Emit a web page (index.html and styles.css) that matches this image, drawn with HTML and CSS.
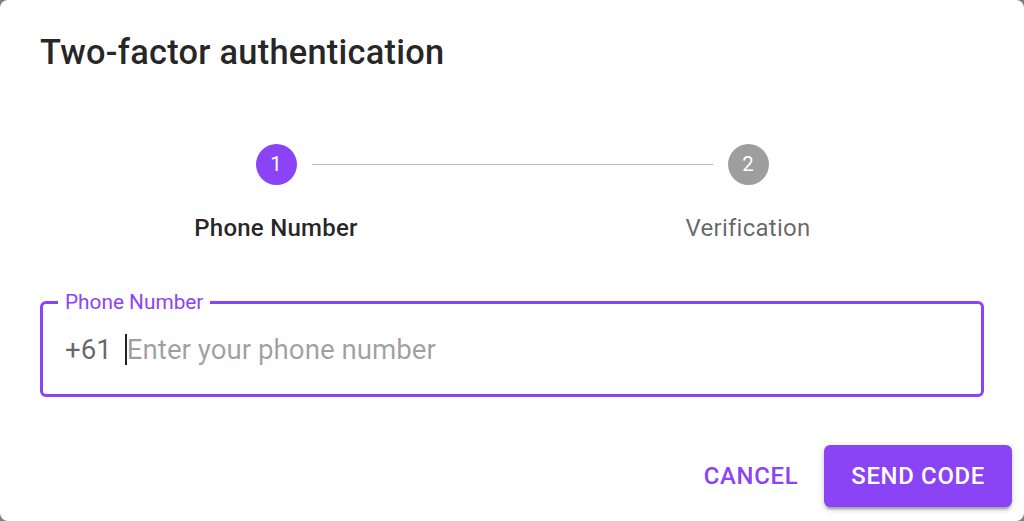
FILE: index.html
```html
<!DOCTYPE html>
<html lang="en">
<head>
<meta charset="utf-8">
<title>Two-factor authentication</title>
<link rel="stylesheet" href="styles.css">
</head>
<body>
<div class="dialog">
  <h2 class="title">Two-factor authentication</h2>
  <div class="content">
    <div class="stepper">
      <div class="step">
        <div class="step-icon active">1</div>
        <div class="step-label active">Phone Number</div>
      </div>
      <div class="step">
        <div class="connector"></div>
        <div class="step-icon">2</div>
        <div class="step-label">Verification</div>
      </div>
    </div>
    <fieldset class="field">
      <legend class="field-label">Phone Number</legend>
      <div class="field-input">
        <span class="prefix">+61</span>
        <span class="caret"></span>
        <span class="placeholder">Enter your phone number</span>
      </div>
    </fieldset>
  </div>
  <div class="actions">
    <button class="btn btn-text">CANCEL</button>
    <button class="btn btn-contained">SEND CODE</button>
  </div>
</div>
</body>
</html>
```
FILE: styles.css
```css
* { box-sizing: border-box; }
html, body {
  margin: 0;
  padding: 0;
  background: #7d7d7d;
  font-family: Roboto, "Liberation Sans", sans-serif;
}
.dialog {
  width: 1024px;
  height: 521px;
  background: #ffffff;
  border-radius: 8px;
  display: flex;
  flex-direction: column;
  overflow: hidden;
}
.title {
  margin: 0;
  padding: 26px 40px 0;
  font-size: 34.4px;
  font-weight: 500;
  line-height: 52px;
  letter-spacing: 0.0075em;
  color: rgba(0, 0, 0, 0.87);
}
.content {
  padding: 0 40px;
}
.stepper {
  display: flex;
  margin-top: 66px;
}
.step {
  flex: 1;
  display: flex;
  flex-direction: column;
  align-items: center;
  position: relative;
}
.connector {
  position: absolute;
  top: 20px;
  left: calc(-50% + 36px);
  right: calc(50% + 35px);
  border-top: 1.6px solid #bdbdbd;
}
.step-icon {
  width: 41px;
  height: 41px;
  border-radius: 50%;
  background: #9e9e9e;
  color: #ffffff;
  font-size: 20.4px;
  line-height: 41px;
  text-align: center;
}
.step-icon.active {
  background: #8a44f6;
}
.step-label {
  margin-top: 27px;
  font-size: 24px;
  line-height: 32px;
  letter-spacing: 0.01em;
  color: rgba(0, 0, 0, 0.6);
}
.step-label.active {
  font-weight: 500;
  color: rgba(0, 0, 0, 0.87);
}
.field {
  margin: 58px 0 0;
  padding: 0 22px;
  height: 106px;
  border: 3px solid #8a44f6;
  border-radius: 6px;
  min-width: 0;
  position: relative;
  top: -11px;
}
.field-label {
  padding: 0 7px;
  margin-left: -7px;
  font-size: 20.8px;
  line-height: 22px;
  color: #8a44f6;
}
.field-input {
  display: flex;
  align-items: center;
  height: 72px;
  font-size: 27.7px;
}
.prefix {
  color: rgba(0, 0, 0, 0.6);
  margin-right: 13px;
}
.caret {
  width: 2px;
  height: 31px;
  background: #222;
}
.placeholder {
  color: rgba(0, 0, 0, 0.38);
}
.actions {
  margin-top: auto;
  display: flex;
  justify-content: flex-end;
  align-items: center;
  gap: 13px;
  padding: 0 12px 14px;
}
.btn {
  font-family: Roboto, "Liberation Sans", sans-serif;
  font-size: 23.9px;
  font-weight: 500;
  letter-spacing: 0.02857em;
  height: 62px;
  border: none;
  border-radius: 6px;
  cursor: pointer;
}
.btn-text {
  background: transparent;
  color: #8a44f6;
  padding: 0 13px;
}
.btn-contained {
  background: #8a44f6;
  color: #ffffff;
  padding: 0 27px;
  box-shadow: 0 5px 2px -3px rgba(0,0,0,0.2), 0 3px 3px 0 rgba(0,0,0,0.14), 0 2px 8px 0 rgba(0,0,0,0.12);
}
```
